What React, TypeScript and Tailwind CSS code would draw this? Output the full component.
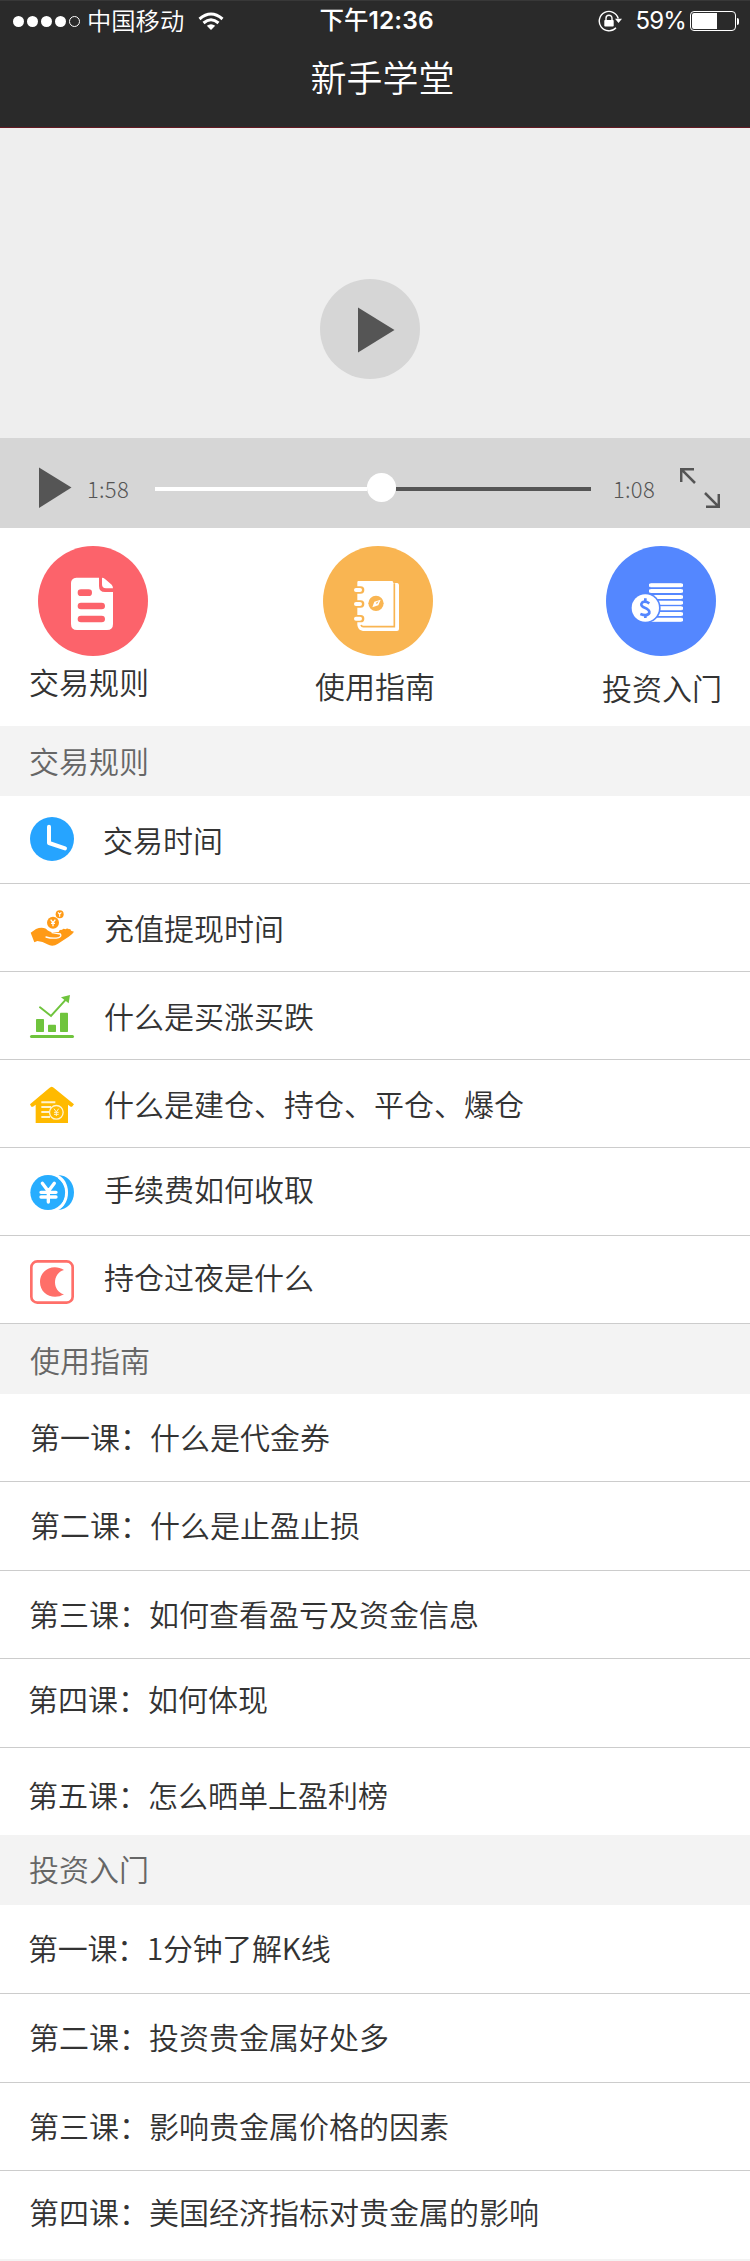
import type { ReactNode } from "react";

const ClockIcon = () => (
  <svg className="h-11 w-11 overflow-visible" viewBox="90 114 132 132" fill="none">
    <circle cx="156" cy="177" r="66" fill="#26a4ff" />
    <path d="M147 140V189L195 205" stroke="#fff" strokeWidth="12" strokeLinecap="round" strokeLinejoin="round" />
  </svg>
);

const HandIcon = () => (
  <svg className="h-11 w-11 overflow-visible" viewBox="90 378 132 132" fill="none">
    <path
      d="M92 458L108 447Q124 440 138 446Q146 456 160 456H176Q178 448 186 450Q190 444 196 448Q202 443 207 448Q212 445 213 452L222 455Q218 462 206 470L174 491Q158 502 142 493Q128 484 112 483L103 487Z"
      fill="#ff9a16"
    />
    <path d="M138 471Q158 477 176 473Q186 469 181 462Q170 460 156 458" stroke="#fff" strokeWidth="4" strokeLinecap="round" />
    <circle cx="159" cy="428" r="18" fill="#ff9a16" />
    <path d="M152 419L159 428L166 419M159 428V439M153 430H165" stroke="#fff" strokeWidth="4" />
    <circle cx="179" cy="403" r="12" fill="#ff9a16" />
    <path d="M174 397L179 403L184 397M179 403V410" stroke="#fff" strokeWidth="3.5" />
  </svg>
);

const ChartIcon = () => (
  <svg className="h-11 w-11 overflow-visible" viewBox="90 642 132 132" fill="#6fc43d">
    <rect x="108" y="717" width="24" height="39" rx="2" />
    <rect x="144" y="734" width="24" height="22" rx="2" />
    <rect x="180" y="698" width="24" height="58" rx="2" />
    <rect x="90" y="765" width="132" height="9" rx="4.5" />
    <path d="M120 682L153 708L198 658" fill="none" stroke="#6fc43d" strokeWidth="6" strokeLinecap="round" />
    <path d="M183 652L210 645L206 670Z" />
  </svg>
);

const HouseIcon = () => (
  <svg className="h-11 w-11 overflow-visible" viewBox="90 66 132 132" fill="none">
    <path d="M155 80Q159 81 163 85L222 133L216 140H212L204 134V189H107V134L99 140H94L90 133L148 84Q151 81 155 80Z" fill="#ffba00" />
    <path d="M124 127H166M124 141H153M124 156H147M124 171H150" stroke="#fff3d0" strokeWidth="6" />
    <circle cx="169" cy="157" r="20.500" fill="#ffba00" stroke="#fff3d0" strokeWidth="4" />
    <path d="M162 146L169 156L176 146M169 156V168M162 157H176M162 163H176" stroke="#fff3d0" strokeWidth="3" />
  </svg>
);

const YenIcon = () => (
  <svg className="h-11 w-11 overflow-visible" viewBox="90 330 132 132" fill="none">
    <path d="M175 345C200 346 222 365 222 397C222 430 200 449 175 450C192 441 204 424 204 397C204 372 192 353 175 345Z" fill="#27adff" />
    <ellipse cx="144" cy="397.500" rx="53" ry="52.500" fill="#27adff" />
    <path d="M176 352Q199 369 199 397Q199 427 176 446" stroke="#fff" strokeWidth="7" />
    <path d="M127 370L145 394L163 370M145 394V426M123 397H168M123 411H168" stroke="#fff" strokeWidth="10" strokeLinecap="round" strokeLinejoin="round" />
  </svg>
);

const MoonIcon = () => (
  <svg className="h-11 w-11 overflow-visible" viewBox="90 594 132 132" fill="none">
    <rect x="94" y="604" width="124" height="124" rx="18" stroke="#ff6f69" strokeWidth="8" />
    <path d="M192 630C156 640 156 693 192 703C160 722 120 703 120 666C120 629 160 610 192 630Z" fill="#ff6f69" />
  </svg>
);

const DocBadge = () => (
  <svg className="h-[110px] w-[110px]" viewBox="114 348 330 330" fill="none">
    <circle cx="279" cy="513" r="165" fill="#fc636b" />
    <path d="M229 443H297V468Q297 486 315 486H339V582Q339 600 321 600H231Q213 600 213 582V459Q213 445 229 443Z" fill="#fff" />
    <path d="M306 443Q311 443 315 447L335 464Q339 469 339 475H318Q306 475 306 463Z" fill="#fff" />
    <path d="M243 488H266M243 528H305M243 567H305" stroke="#fc636b" strokeWidth="20" strokeLinecap="round" />
  </svg>
);

const BookBadge = () => (
  <svg className="h-[110px] w-[110px]" viewBox="969 348 330 330" fill="none">
    <circle cx="1134" cy="513" r="165" fill="#f9b552" />
    <path d="M1075 453H1176Q1180 453 1180 459H1192Q1197 460 1197 465V597Q1197 603 1191 603H1089Q1074 601 1072 585V457Q1072 453 1075 453Z" fill="#fff" />
    <path d="M1083 585Q1085 590 1090 590H1183V460" stroke="#f9b552" strokeWidth="5" />
    <path d="M1068 480H1082M1068 522H1082M1068 566H1082" stroke="#f9b552" strokeWidth="22" strokeLinecap="round" />
    <path d="M1068 480H1080M1068 522H1080M1068 566H1080" stroke="#fff" strokeWidth="12" strokeLinecap="round" />
    <circle cx="1128" cy="520" r="23" fill="#f9b552" />
    <path d="M1142 509L1123 515L1117 532L1135 526Z" fill="#fff" />
    <path d="M1127 519L1136 513L1131 522Z" fill="#f9b552" />
  </svg>
);

const CoinBadge = () => (
  <svg className="h-[110px] w-[110px]" viewBox="693 348 330 330" fill="none">
    <circle cx="858" cy="513" r="165" fill="#5487ff" />
    <path d="M826 466H920M826 483H920M826 501H920M826 518H920M826 535H920M826 552H920M826 569H920" stroke="#fff" strokeWidth="12" />
    <path d="M822 466H924M822 483H924M826 501H924M826 518H924M826 535H924M826 552H924M830 569H924" stroke="#fff" strokeWidth="9" />
    <circle cx="811" cy="534" r="46" fill="#5487ff" />
    <circle cx="811" cy="534" r="41" fill="#fff" />
    <path d="M823 520Q810 512 802 517Q794 525 806 532Q825 539 823 549Q817 560 796 552M811 505V515M811 554V564" stroke="#5487ff" strokeWidth="8" />
  </svg>
);

const WifiIcon = () => (
  <svg className="h-[19px] w-[26px]" viewBox="0 0 26 19" fill="none" stroke="#fff" strokeWidth="3">
    <path d="M1.500 7Q13-3 24.500 7" />
    <path d="M5.500 11Q13 4.500 20.500 11" />
    <path d="M13 18L8.800 13.800Q13 10.500 17.200 13.800Z" fill="#fff" stroke="none" />
  </svg>
);

const LockIcon = () => (
  <svg className="h-[22px] w-[24px]" viewBox="0 0 24 22" fill="none" stroke="#fff">
    <path d="M20.300 8.500A9.700 9.700 0 1 0 18 17.800" strokeWidth="1.400" />
    <path d="M17 8.800H24L20.500 13Z" fill="#fff" stroke="none" />
    <rect x="6.300" y="10" width="9.400" height="6.500" rx=".8" fill="#fff" stroke="none" />
    <path d="M8 10.500V8.200A3 3 0 0 1 14 8.200V10.500" strokeWidth="1.400" />
  </svg>
);

const StatusBar = () => (
  <div className="flex h-[41px] items-center border-t border-[#383838] text-white">
    <div className="ml-[12.500px] flex gap-[3px]">
      <i className="h-[11px] w-[11px] rounded-full bg-white" />
      <i className="h-[11px] w-[11px] rounded-full bg-white" />
      <i className="h-[11px] w-[11px] rounded-full bg-white" />
      <i className="h-[11px] w-[11px] rounded-full bg-white" />
      <i className="h-[11px] w-[11px] rounded-full border border-white" />
    </div>
    <div className="ml-[7.500px] w-[97.500px] pb-[3px] text-[24.300px] leading-[36px] font-[350] whitespace-nowrap">中国移动</div>
    <div className="ml-[13px]">
      <WifiIcon />
    </div>
    <div className="ml-[96px] w-[119px] pb-[3px] text-[24.500px] leading-[36px] font-medium whitespace-nowrap">
      下午<span className="font-['Inter'] text-[24.500px] font-semibold tracking-[0.100px]">12:36</span>
    </div>
    <div className="ml-[159px]">
      <LockIcon />
    </div>
    <div className="ml-[14px] w-[49px] font-['Inter'] text-[24px] leading-[36px] font-normal tracking-[-0.8px]">59%</div>
    <div className="ml-[5px] flex items-center gap-px">
      <div className="h-5 w-[46px] rounded-[4px] border border-white p-px">
        <div className="h-full w-[25px] rounded-l-[2px] bg-white" />
      </div>
      <div className="h-[7px] w-[2px] rounded-r bg-white" />
    </div>
  </div>
);

const Player = () => (
  <section>
    <div className="flex h-[310px] justify-center bg-[#eeeeee] pt-[151px] pr-[10px]">
      <div className="h-[100px] w-[100px] rounded-full bg-[#d6d6d6]">
        <svg className="h-full w-full" viewBox="0 0 100 100">
          <path d="M38 28.500L74.500 51L38 73.500Z" fill="#555" />
        </svg>
      </div>
    </div>
    <div className="flex h-[90px] items-center bg-[#d6d6d6] pt-[10px] text-[22px] font-light text-[#555]">
      <svg className="ml-[39px] h-[42px] w-[33px]" viewBox="0 0 33 42">
        <path d="M0 .5L32.500 20.500L0 41Z" fill="#555" />
      </svg>
      <span className="ml-[15px] w-[42px] tracking-[0.3px]">1:58</span>
      <div className="ml-[26px] flex h-[30px] w-[436px] items-center">
        <div className="mt-[2px] h-1 w-[212px] bg-white" />
        <div className="mb-px h-[29px] w-[29px] rounded-full bg-white" />
        <div className="mt-[2px] h-1 grow bg-[#555]" />
      </div>
      <span className="ml-[22px] w-[42px] tracking-[0.3px]">1:08</span>
      <svg className="ml-[25px] h-10 w-10" viewBox="0 0 40 40" fill="none" stroke="#555" strokeWidth="2.500">
        <path d="M1.200 14V1.200H14M1.200 1.200L15 15M38.800 26V38.800H26M38.800 38.800L25 25" />
      </svg>
    </div>
  </section>
);

const Heading = ({ pad, children }: { pad: string; children: ReactNode }) => (
  <h2 className={`flex h-[70px] items-center bg-[#f3f3f3] text-[#666] ${pad}`}>{children}</h2>
);

const topics = [
  { icon: <ClockIcon />, label: "交易时间", pad: "ml-[29px] pb-[2px]" },
  { icon: <HandIcon />, label: "充值提现时间", pad: "ml-[30px] pb-px" },
  { icon: <ChartIcon />, label: "什么是买涨买跌", pad: "ml-[30px] pb-px" },
  { icon: <HouseIcon />, label: "什么是建仓、持仓、平仓、爆仓", pad: "ml-[30px] pb-px" },
  { icon: <YenIcon />, label: "手续费如何收取", pad: "ml-[30px] pb-[7px]" },
  { icon: <MoonIcon />, label: "持仓过夜是什么", pad: "ml-[30px] pb-[7px]" },
];

const guide = [
  { label: "第一课：什么是代金券", box: "h-[88px] border-b pl-[30px] pb-[4px]" },
  { label: "第二课：什么是止盈止损", box: "h-[89px] border-b pl-[30px] pb-[5px]" },
  { label: "第三课：如何查看盈亏及资金信息", box: "h-[88px] border-b pl-[29px] pb-[4px]" },
  { label: "第四课：如何体现", box: "h-[89px] border-b pl-[28px] pb-[10px]" },
  { label: "第五课：怎么晒单上盈利榜", box: "h-[87px] pl-[28px] pt-[4px]" },
];

const invest = [
  { label: "第一课：1分钟了解K线", box: "h-[89px] border-b pl-[28px] pb-[5px] tracking-[-0.3px]" },
  { label: "第二课：投资贵金属好处多", box: "h-[89px] border-b pl-[29px] pb-[5px]" },
  { label: "第三课：影响贵金属价格的因素", box: "h-[88px] border-b pl-[29px] pb-[4px]" },
  { label: "第四课：美国经济指标对贵金属的影响", box: "h-[88px] pl-[29px] pb-[8px]" },
];

const Lessons = ({ items }: { items: { label: string; box: string }[] }) => (
  <ul>
    {items.map((item) => (
      <li key={item.label} className={`flex items-center border-[#cccccc] ${item.box}`}>
        {item.label}
      </li>
    ))}
  </ul>
);

export default function App() {
  return (
    <main className="h-[2261px] w-[750px] overflow-hidden bg-white font-['Noto_Sans_CJK_SC',sans-serif] text-[30px] leading-[44px] font-[350] text-[#333]">
      <header className="h-[128px] border-b border-[#651a22] bg-[#2a2a2a]">
        <StatusBar />
        <h1 className="mt-[8px] pl-[15px] text-center text-[36px] leading-[54px] text-white">新手学堂</h1>
      </header>
      <Player />
      <nav className="flex h-[198px] pt-[18px]">
        <a className="ml-[29px] w-[120px]">
          <span className="block pl-[9px]">
            <DocBadge />
          </span>
          <span className="mt-[3px] block">交易规则</span>
        </a>
        <a className="ml-[166px] w-[120px]">
          <span className="block pl-[8px]">
            <BookBadge />
          </span>
          <span className="mt-[7px] block">使用指南</span>
        </a>
        <a className="ml-[167px] w-[120px]">
          <span className="block pl-[4px]">
            <CoinBadge />
          </span>
          <span className="mt-[9px] block">投资入门</span>
        </a>
      </nav>
      <Heading pad="pl-[29px] pb-[3px]">交易规则</Heading>
      <ul>
        {topics.map((topic) => (
          <li key={topic.label} className="flex h-[88px] items-center border-b border-[#cccccc] pl-[30px]">
            {topic.icon}
            <span className={topic.pad}>{topic.label}</span>
          </li>
        ))}
      </ul>
      <Heading pad="pl-[30px] pb-px">使用指南</Heading>
      <Lessons items={guide} />
      <Heading pad="pl-[29px] pb-[5px]">投资入门</Heading>
      <Lessons items={invest} />
      <div className="h-[2px] bg-[#f3f3f3]" />
    </main>
  );
}
